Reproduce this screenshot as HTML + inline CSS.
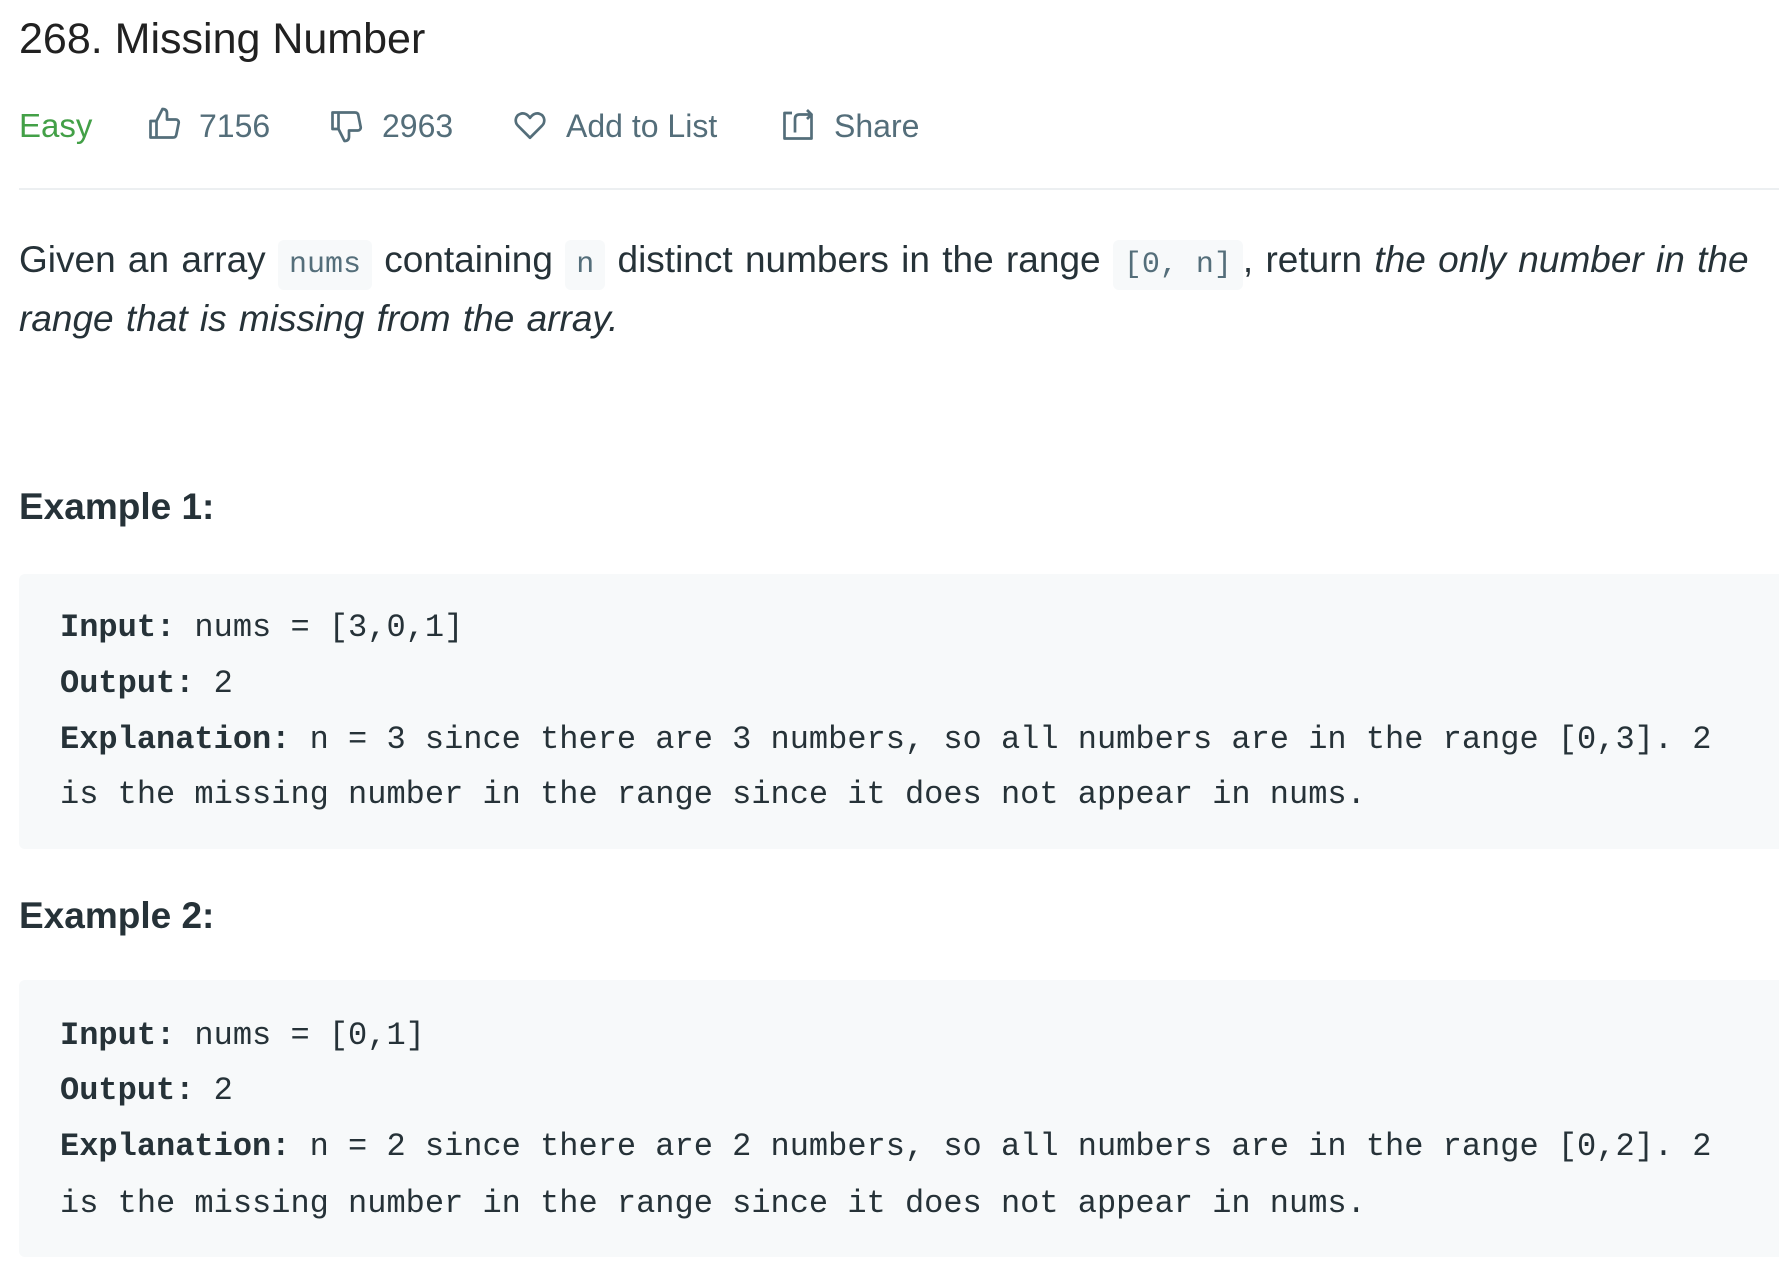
<!DOCTYPE html>
<html><head><meta charset="utf-8"><style>
html,body{margin:0;padding:0;background:#fff;width:1779px;height:1274px;overflow:hidden;position:relative;font-family:"Liberation Sans",sans-serif;color:#263238}
.a{position:absolute;white-space:nowrap}
.t{left:19px;top:15px;font-size:43px;color:#212121;line-height:48px}
.row{top:104px;height:44px;line-height:44px;font-size:32px;color:#546e7a}
.easy{color:#43a047;font-size:33px}
hr{position:absolute;left:19px;top:188px;width:1760px;border:0;border-top:2px solid #eceff1;margin:0}
.p{left:19px;font-size:37px;line-height:58px;color:#263238;word-spacing:2px}
code{font-family:"Liberation Mono",monospace;font-size:30px;color:#546e7a;background:#f7f9fa;padding:8px 11px;border-radius:6px;word-spacing:0}
.h{left:19px;font-size:37px;font-weight:bold;color:#263238}
.pre{position:absolute;left:19px;width:1770px;background:#f7f9fa;border-radius:6px}
.m{left:60px;font-family:"Liberation Mono",monospace;font-size:32px;line-height:56px;color:#263238}
.m b{font-weight:bold}
svg{position:absolute}
</style></head><body>
<div class="a t">268. Missing Number</div>
<div class="a row easy" style="left:19px">Easy</div>
<svg style="left:146px;top:106px" width="36" height="36" viewBox="0 0 24 24" fill="none" stroke="#546e7a" stroke-width="1.8" stroke-linejoin="round"><path d="M3 10h4v11H3zM7 10l4-8c2 0 3 1 3 3v4h6c1 0 2 1 1.8 2.2l-1.6 8C20 20.5 19 21 18 21H7"/></svg>
<div class="a row" style="left:199px">7156</div>
<svg style="left:328px;top:108px" width="36" height="36" viewBox="0 0 24 24" fill="none" stroke="#546e7a" stroke-width="1.8" stroke-linejoin="round"><path d="M3 14h4V3H3zM7 14l4 8c2 0 3-1 3-3v-4h6c1 0 2-1 1.8-2.2l-1.6-8C20 3.5 19 3 18 3H7"/></svg>
<div class="a row" style="left:382px">2963</div>
<svg style="left:512px;top:108px" width="36" height="34" viewBox="0 0 24 24" fill="none" stroke="#546e7a" stroke-width="1.9" stroke-linejoin="round"><path d="M12 21L3.5 12.5C1 10 1.5 5.5 5 4.2 8 3 10.5 4.8 12 7c1.5-2.2 4-4 7-2.8 3.5 1.3 4 5.8 1.5 8.3z"/></svg>
<div class="a row" style="left:566px">Add to List</div>
<svg style="left:780px;top:107px" width="36" height="36" viewBox="0 0 24 24" fill="none" stroke="#546e7a" stroke-width="1.8" stroke-linejoin="round"><path d="M8 4H3v17h18V5M10 17V8c0-2 1-3 3-3h8M18 2l3 3-3 3"/></svg>
<div class="a row" style="left:834px">Share</div>
<hr>
<div class="a p" style="top:231px">Given an array <code>nums</code> containing <code>n</code> distinct numbers in the range <code>[0, n]</code>, return <i>the only number in the</i></div>
<div class="a p" style="top:290px"><i>range that is missing from the array.</i></div>
<div class="a h" style="top:486px">Example 1:</div>
<div class="pre" style="top:574px;height:275px"></div>
<div class="a m" style="top:600px"><b>Input:</b> nums = [3,0,1]</div>
<div class="a m" style="top:656px"><b>Output:</b> 2</div>
<div class="a m" style="top:712px"><b>Explanation:</b> n = 3 since there are 3 numbers, so all numbers are in the range [0,3]. 2</div>
<div class="a m" style="top:767px">is the missing number in the range since it does not appear in nums.</div>
<div class="a h" style="top:895px">Example 2:</div>
<div class="pre" style="top:980px;height:277px"></div>
<div class="a m" style="top:1008px"><b>Input:</b> nums = [0,1]</div>
<div class="a m" style="top:1063px"><b>Output:</b> 2</div>
<div class="a m" style="top:1119px"><b>Explanation:</b> n = 2 since there are 2 numbers, so all numbers are in the range [0,2]. 2</div>
<div class="a m" style="top:1176px">is the missing number in the range since it does not appear in nums.</div>
</body></html>
